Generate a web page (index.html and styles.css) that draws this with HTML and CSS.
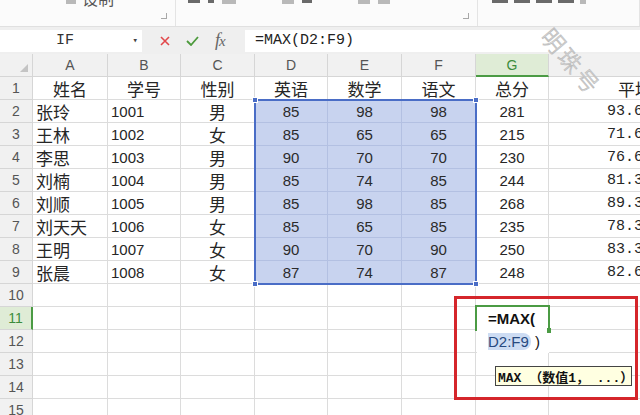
FILE: index.html
```html
<!DOCTYPE html>
<html lang="zh">
<head>
<meta charset="utf-8">
<title>WPS 表格</title>
<link rel="stylesheet" href="styles.css">
</head>
<body>
<div class="ribbon">
  <div class="rgroup g1">
    <span class="rbar w10"></span>
    <span class="rlabel">设制</span>
    <span class="launch"></span>
  </div>
  <div class="rgroup g2">
    <span class="rbar w12 dark"></span>
    <span class="rbar w6 dark"></span>
    <span class="rbar w14"></span>
    <span class="rspacer"></span>
    <span class="rbar w12"></span>
    <span class="rbar w10 dark"></span>
    <span class="rspacer"></span>
    <span class="rbar w12"></span>
    <span class="rbar w12"></span>
    <span class="launch"></span>
  </div>
  <div class="rgroup g3">
    <span class="rbar w16 dark"></span>
    <span class="rbar w16 dark"></span>
    <span class="rbar w16 dark"></span>
    <span class="rbar w16 dark"></span>
    <span class="rbar w6"></span>
  </div>
</div>

<div class="fbar">
  <div class="namebox"><span class="name">IF</span><span class="caret">▾</span></div>
  <div class="fbtns">
    <svg class="ico" width="10" height="10" viewBox="0 0 10 10"><path d="M1 1 L9 9 M9 1 L1 9" stroke="#e2474a" stroke-width="1.6" fill="none"/></svg>
    <svg class="ico" width="13" height="10" viewBox="0 0 13 10"><path d="M1 5 L5 9 L12 1" stroke="#4c9a3c" stroke-width="1.8" fill="none"/></svg>
    <span class="fx"><i>f</i><i class="x">x</i></span>
  </div>
  <div class="finput">=MAX(D2:F9)</div>
</div>

<div class="sheet">
  <div class="c h corner"><span class="tri"></span></div>
  <div class="c h">A</div><div class="c h">B</div><div class="c h">C</div><div class="c h">D</div><div class="c h">E</div><div class="c h">F</div><div class="c h hg">G</div><div class="c h"></div>

  <div class="c h">1</div>
  <div class="c ctr cjk">姓名</div><div class="c ctr cjk">学号</div><div class="c ctr cjk">性别</div><div class="c ctr cjk">英语</div><div class="c ctr cjk">数学</div><div class="c ctr cjk">语文</div><div class="c ctr cjk">总分</div><div class="c cjk avgh">平均分</div>

  <div class="c h">2</div>
  <div class="c cjk">张玲</div><div class="c">1001</div><div class="c ctr cjk">男</div><div class="c ctr s">85</div><div class="c ctr s">98</div><div class="c ctr s">98</div><div class="c ctr">281</div><div class="c avg">93.67</div>

  <div class="c h">3</div>
  <div class="c cjk">王林</div><div class="c">1002</div><div class="c ctr cjk">女</div><div class="c ctr s">85</div><div class="c ctr s">65</div><div class="c ctr s">65</div><div class="c ctr">215</div><div class="c avg">71.67</div>

  <div class="c h">4</div>
  <div class="c cjk">李思</div><div class="c">1003</div><div class="c ctr cjk">男</div><div class="c ctr s">90</div><div class="c ctr s">70</div><div class="c ctr s">70</div><div class="c ctr">230</div><div class="c avg">76.67</div>

  <div class="c h">5</div>
  <div class="c cjk">刘楠</div><div class="c">1004</div><div class="c ctr cjk">男</div><div class="c ctr s">85</div><div class="c ctr s">74</div><div class="c ctr s">85</div><div class="c ctr">244</div><div class="c avg">81.33</div>

  <div class="c h">6</div>
  <div class="c cjk">刘顺</div><div class="c">1005</div><div class="c ctr cjk">男</div><div class="c ctr s">85</div><div class="c ctr s">98</div><div class="c ctr s">85</div><div class="c ctr">268</div><div class="c avg">89.33</div>

  <div class="c h">7</div>
  <div class="c cjk">刘天天</div><div class="c">1006</div><div class="c ctr cjk">女</div><div class="c ctr s">85</div><div class="c ctr s">65</div><div class="c ctr s">85</div><div class="c ctr">235</div><div class="c avg">78.33</div>

  <div class="c h">8</div>
  <div class="c cjk">王明</div><div class="c">1007</div><div class="c ctr cjk">女</div><div class="c ctr s">90</div><div class="c ctr s">70</div><div class="c ctr s">90</div><div class="c ctr">250</div><div class="c avg">83.33</div>

  <div class="c h">9</div>
  <div class="c cjk">张晨</div><div class="c">1008</div><div class="c ctr cjk">女</div><div class="c ctr s">87</div><div class="c ctr s">74</div><div class="c ctr s">87</div><div class="c ctr">248</div><div class="c avg">82.67</div>

  <div class="c h">10</div>
  <div class="c"></div><div class="c"></div><div class="c"></div><div class="c"></div><div class="c"></div><div class="c"></div><div class="c"></div><div class="c"></div>

  <div class="c h hr">11</div>
  <div class="c"></div><div class="c"></div><div class="c"></div><div class="c"></div><div class="c"></div><div class="c"></div><div class="c"></div><div class="c"></div>

  <div class="c h">12</div>
  <div class="c"></div><div class="c"></div><div class="c"></div><div class="c"></div><div class="c"></div><div class="c"></div><div class="c"></div><div class="c"></div>

  <div class="c h">13</div>
  <div class="c"></div><div class="c"></div><div class="c"></div><div class="c"></div><div class="c"></div><div class="c"></div><div class="c"></div><div class="c"></div>

  <div class="c h">14</div>
  <div class="c"></div><div class="c"></div><div class="c"></div><div class="c"></div><div class="c"></div><div class="c"></div><div class="c"></div><div class="c"></div>

  <div class="c h">15</div>
  <div class="c"></div><div class="c"></div><div class="c"></div><div class="c"></div><div class="c"></div><div class="c"></div><div class="c"></div><div class="c"></div>

  <div class="selbox"></div>
  <span class="hd hd-tl"></span><span class="hd hd-tr"></span><span class="hd hd-bl"></span><span class="hd hd-br"></span>

  <div class="editor">
    <div class="eline strong">=MAX(</div>
    <div class="eline"><span class="ref">D2:F9</span>&nbsp;)</div>
  </div>
  <div class="actbox"></div>
  <span class="acthd"></span>

  <div class="redbox"></div>
  <div class="tip">MAX （数值1， ...）</div>
</div>

<div class="watermark">明珠号</div>
</body>
</html>
```

FILE: styles.css
```css
* { box-sizing: border-box; }
html, body { margin: 0; padding: 0; }
body {
  width: 640px;
  height: 415px;
  overflow: hidden;
  position: relative;
  background: #ffffff;
  font-family: "Liberation Sans", "Noto Sans CJK SC", sans-serif;
  color: #222;
}

/* ribbon (cut off at top) */
.ribbon {
  height: 27px;
  display: flex;
  background: #fbfbfb;
  border-bottom: 1px solid #e0e0e0;
}
.rgroup {
  display: flex;
  align-items: flex-start;
  border-right: 1px solid #e4e4e4;
  height: 26px;
}
.g1 { width: 176px; padding-left: 66px; gap: 6px; }
.g2 { width: 302px; padding-left: 12px; gap: 8px; }
.g3 { flex: 1; padding-left: 14px; gap: 6px; }
.rbar { height: 4px; background: #b9b9b9; }
.rbar.dark { background: #6a6a6a; height: 3px; }
.w6 { width: 6px; }
.w10 { width: 10px; }
.w12 { width: 12px; }
.w14 { width: 14px; }
.w16 { width: 16px; }
.rspacer { width: 30px; }
.rlabel {
  font-family: "Noto Sans CJK SC", sans-serif;
  font-size: 16px;
  line-height: 16px;
  margin-top: -10px;
  color: #555;
}
.launch {
  margin-left: auto;
  margin-right: 8px;
  align-self: flex-end;
  margin-bottom: 7px;
  width: 6px;
  height: 6px;
  border-right: 1px solid #a8a8a8;
  border-bottom: 1px solid #a8a8a8;
}

/* formula bar */
.fbar {
  height: 27px;
  display: flex;
  align-items: center;
  background: #efefef;
}
.namebox {
  width: 142px;
  height: 22px;
  background: #fff;
  display: flex;
  align-items: center;
  font-family: "Liberation Mono", monospace;
  font-size: 15px;
  color: #333;
}
.namebox .name { margin-left: 56px; }
.namebox .caret { margin-left: auto; margin-right: 4px; font-size: 9px; color: #444; }
.fbtns {
  width: 103px;
  display: flex;
  align-items: center;
  padding-left: 18px;
  gap: 16px;
}
.ico { display: block; }
.fx {
  font-family: "Liberation Serif", serif;
  font-size: 18px;
  color: #666;
  letter-spacing: -1px;
}
.fx .x { font-size: 15px; }
.finput {
  flex: 1;
  height: 22px;
  background: #fff;
  display: flex;
  align-items: center;
  padding-left: 10px;
  font-family: "Liberation Mono", monospace;
  font-size: 15px;
  color: #222;
}

/* sheet grid */
.sheet {
  position: relative;
  display: grid;
  grid-template-columns: 33px 75px 73px 74px 73px 74px 74px 73px 110px;
  grid-auto-rows: 23px;
  width: 659px;
}
.c {
  display: flex;
  align-items: center;
  padding: 0 3px;
  white-space: nowrap;
  overflow: hidden;
  border-right: 1px solid #dcdcdc;
  border-bottom: 1px solid #dcdcdc;
  font-size: 15px;
  line-height: 1;
  color: #262626;
}
.h {
  background: #f1f1f1;
  color: #555;
  font-size: 14px;
  justify-content: center;
  border-color: #d6d6d6;
}
.corner { justify-content: flex-end; align-items: flex-end; padding: 0 4px 4px 0; }
.tri {
  width: 0; height: 0;
  border-left: 8px solid transparent;
  border-bottom: 8px solid #c4c4c4;
}
.hg {
  background: #dfecd6;
  color: #3c8c3c;
  border-bottom: 2px solid #4b9b44;
}
.hr {
  background: #dfecd6;
  color: #3c8c3c;
  border-right: 2px solid #4b9b44;
}
.ctr { justify-content: center; }
.cjk {
  font-family: "Noto Sans CJK SC", sans-serif;
  font-size: 17px;
}
.s {
  background: #c8d3ef;
  border-color: #b3c0e2;
  color: #2b2b2b;
}
.avgh { padding-left: 69px; }
.avg {
  justify-content: flex-end;
  padding-right: 6px;
  font-family: "Liberation Mono", monospace;
  font-size: 15px;
}

/* selection overlay D2:F9 */
.selbox {
  position: absolute;
  left: 254px;
  top: 45px;
  width: 223px;
  height: 186px;
  border: 2px solid #4a6dc6;
  pointer-events: none;
}
.hd {
  position: absolute;
  width: 6px;
  height: 6px;
  background: #4a6dc6;
  border: 1px solid #fff;
}
.hd-tl { left: 252px; top: 43px; }
.hd-tr { left: 473px; top: 43px; }
.hd-bl { left: 252px; top: 227px; }
.hd-br { left: 473px; top: 227px; }

/* active cell editor G11 */
.editor {
  position: absolute;
  left: 477px;
  top: 253px;
  width: 72px;
  height: 46px;
  background: #fff;
  padding-left: 11px;
}
.eline {
  height: 23px;
  display: flex;
  align-items: center;
  font-size: 15px;
  color: #111;
  white-space: nowrap;
}
.eline.strong { font-weight: bold; }
.ref {
  background: #cddcf3;
  color: #27497f;
  border-radius: 0 8px 8px 0;
  padding-right: 2px;
}
.actbox {
  position: absolute;
  left: 475px;
  top: 251px;
  width: 75px;
  height: 26px;
  border: 2px solid #4b9b44;
  border-bottom: none;
}
.acthd {
  position: absolute;
  left: 547px;
  top: 274px;
  width: 4px;
  height: 5px;
  background: #4b9b44;
}

/* annotation */
.redbox {
  position: absolute;
  left: 454px;
  top: 242px;
  width: 184px;
  height: 104px;
  border: 3px solid #d5262b;
}
.tip {
  position: absolute;
  left: 495px;
  top: 312px;
  width: 137px;
  height: 20px;
  background: #ffffe1;
  border: 1px solid #444;
  display: flex;
  align-items: center;
  padding-left: 2px;
  font-family: "Liberation Mono", "Noto Sans CJK SC", monospace;
  font-weight: bold;
  font-size: 13px;
  color: #111;
  white-space: nowrap;
}

/* watermark */
.watermark {
  position: absolute;
  left: 530px;
  top: 48px;
  width: 84px;
  height: 26px;
  line-height: 26px;
  text-align: center;
  font-family: "Noto Sans CJK SC", sans-serif;
  font-weight: 300;
  font-size: 23px;
  letter-spacing: 3px;
  color: #ffffff;
  -webkit-text-stroke: 0.8px #bdbdbd;
  transform: rotate(50deg);
}
```
